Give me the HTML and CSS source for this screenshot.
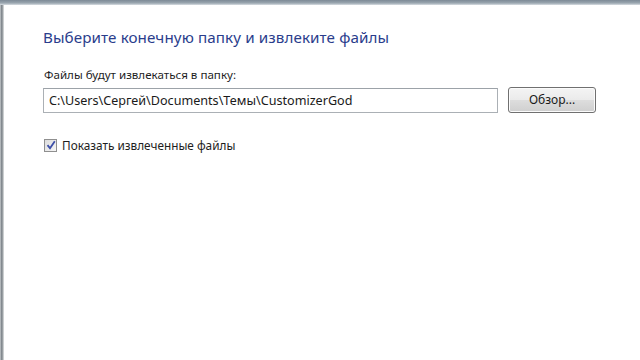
FILE: index.html
```html
<!DOCTYPE html>
<html lang="ru">
<head>
<meta charset="utf-8">
<link rel="stylesheet" href="styles.css">
</head>
<body>
<div class="window">
  <div class="topbar"></div>
  <div class="main">
    <div class="leftedge"></div>
    <div class="content">
      <h1 class="title">Выберите конечную папку и извлеките файлы</h1>
      <div class="label">Файлы будут извлекаться в папку:</div>
      <div class="row">
        <div class="input">C:\Users\Сергей\Documents\Темы\CustomizerGod</div>
        <div class="button">Обзор...</div>
      </div>
      <div class="check">
        <span class="box"><svg width="10" height="10" viewBox="0 0 10 10"><path d="M1.5 5.2 L4 8.2 L8.8 1.2" fill="none" stroke="#3d4fa8" stroke-width="1.8"/></svg></span>
        <span class="checklabel">Показать извлеченные файлы</span>
      </div>
    </div>
  </div>
</div>
</body>
</html>
```
FILE: styles.css
```css
html, body { margin: 0; padding: 0; background: #fff; }
body { width: 640px; height: 360px; overflow: hidden; font-family: "Noto Sans", "Open Sans", sans-serif; color: #1a1a1a; }
.window { display: flex; flex-direction: column; height: 360px; }
.topbar { height: 5px; background: linear-gradient(to bottom, #7d8a96 0%, #9aa6b0 60%, #d8dde2 100%); flex: none; }
.main { flex: 1; display: flex; }
.leftedge { width: 4px; flex: none; background: linear-gradient(to right, #c9cdd0 0%, #7e858b 40%, #a8adb0 75%, #eef0f0 100%); }
.content { flex: 1; padding: 22px 0 0 39px; }
.title { margin: 0; font-weight: normal; font-size: 15.2px; line-height: 20px; color: #2a3d8c; letter-spacing: 0.1px; }
.label { margin-top: 20px; font-size: 11.6px; line-height: 16px; color: #1e1e1e; padding-left: 1px; }
.row { display: flex; align-items: center; margin-top: 4px; }
.input { width: 448px; height: 23px; border: 1px solid #abb0b5; border-top-color: #9ca2a8; box-sizing: content-box; padding-left: 5px; font-size: 12.6px; line-height: 23px; color: #1a1a1a; }
.button { margin-left: 10px; width: 86px; height: 24px; border: 1px solid #707070; border-radius: 3px; background: linear-gradient(to bottom, #f4f4f4 0%, #ebebeb 48%, #dddddd 52%, #cfcfcf 100%); box-shadow: inset 0 0 0 1px #fbfbfb; font-size: 12px; line-height: 24px; text-align: center; color: #1a1a1a; }
.check { display: flex; align-items: center; margin-top: 24px; padding-left: 1px; }
.box { width: 11px; height: 11px; border: 1px solid #8f8f8f; background: linear-gradient(135deg, #dcdcdc, #f6f6f6); display: flex; align-items: center; justify-content: center; }
.checklabel { margin-left: 5px; font-size: 11.8px; line-height: 16px; color: #1e1e1e; }
```
